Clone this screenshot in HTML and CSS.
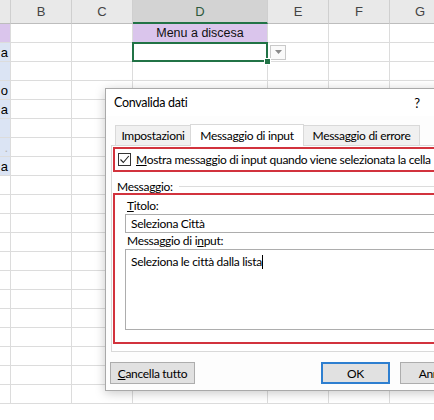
FILE: index.html
```html
<!DOCTYPE html>
<html>
<head>
<meta charset="utf-8">
<link rel="stylesheet" href="styles.css">
</head>
<body>
<div class="sheet">
  <div class="row head">
    <div class="c"></div><div class="c">B</div><div class="c">C</div><div class="c selcol">D</div><div class="c">E</div><div class="c">F</div><div class="c">G</div>
  </div>
  <div class="row">
    <div class="c purple"></div><div class="c"></div><div class="c"></div><div class="c purple menu">Menu a discesa</div><div class="c"></div><div class="c"></div><div class="c"></div>
  </div>
  <div class="row">
    <div class="c blue cut">a</div><div class="c"></div><div class="c"></div><div class="c active"></div><div class="c dd"><span class="ddbtn"><svg width="7" height="4" viewBox="0 0 7 4"><path d="M0 0h7L3.5 4z" fill="#8a8a8a"/></svg></span></div><div class="c"></div><div class="c"></div>
  </div>
  <div class="row">
    <div class="c blue"></div><div class="c"></div><div class="c"></div><div class="c"></div><div class="c"></div><div class="c"></div><div class="c"></div>
  </div>
  <div class="row">
    <div class="c blue cut">o</div><div class="c"></div><div class="c"></div><div class="c"></div><div class="c"></div><div class="c"></div><div class="c"></div>
  </div>
  <div class="row">
    <div class="c blue cut">a</div><div class="c"></div><div class="c"></div><div class="c"></div><div class="c"></div><div class="c"></div><div class="c"></div>
  </div>
  <div class="row">
    <div class="c blue"></div><div class="c"></div><div class="c"></div><div class="c"></div><div class="c"></div><div class="c"></div><div class="c"></div>
  </div>
  <div class="row">
    <div class="c blue cut faint">.</div><div class="c"></div><div class="c"></div><div class="c"></div><div class="c"></div><div class="c"></div><div class="c"></div>
  </div>
  <div class="row">
    <div class="c blue cut">a</div><div class="c"></div><div class="c"></div><div class="c"></div><div class="c"></div><div class="c"></div><div class="c"></div>
  </div>
  <div class="row"><div class="c"></div><div class="c"></div><div class="c"></div><div class="c"></div><div class="c"></div><div class="c"></div><div class="c"></div></div>
  <div class="row"><div class="c"></div><div class="c"></div><div class="c"></div><div class="c"></div><div class="c"></div><div class="c"></div><div class="c"></div></div>
  <div class="row"><div class="c"></div><div class="c"></div><div class="c"></div><div class="c"></div><div class="c"></div><div class="c"></div><div class="c"></div></div>
  <div class="row"><div class="c"></div><div class="c"></div><div class="c"></div><div class="c"></div><div class="c"></div><div class="c"></div><div class="c"></div></div>
  <div class="row"><div class="c"></div><div class="c"></div><div class="c"></div><div class="c"></div><div class="c"></div><div class="c"></div><div class="c"></div></div>
  <div class="row"><div class="c"></div><div class="c"></div><div class="c"></div><div class="c"></div><div class="c"></div><div class="c"></div><div class="c"></div></div>
  <div class="row"><div class="c"></div><div class="c"></div><div class="c"></div><div class="c"></div><div class="c"></div><div class="c"></div><div class="c"></div></div>
  <div class="row"><div class="c"></div><div class="c"></div><div class="c"></div><div class="c"></div><div class="c"></div><div class="c"></div><div class="c"></div></div>
  <div class="row"><div class="c"></div><div class="c"></div><div class="c"></div><div class="c"></div><div class="c"></div><div class="c"></div><div class="c"></div></div>
  <div class="row"><div class="c"></div><div class="c"></div><div class="c"></div><div class="c"></div><div class="c"></div><div class="c"></div><div class="c"></div></div>
  <div class="row"><div class="c"></div><div class="c"></div><div class="c"></div><div class="c"></div><div class="c"></div><div class="c"></div><div class="c"></div></div>
  <div class="row"><div class="c"></div><div class="c"></div><div class="c"></div><div class="c"></div><div class="c"></div><div class="c"></div><div class="c"></div></div>
</div>

<div class="dialog">
  <div class="titlebar">
    <span class="dtitle">Convalida dati</span>
    <span class="tbtns"><span class="help">?</span><span class="close"></span></span>
  </div>
  <div class="tabs">
    <span class="tab t1">Impostazioni</span>
    <span class="tab t2 on">Messaggio di input</span>
    <span class="tab t3">Messaggio di errore</span>
  </div>
  <div class="panel">
    <div class="redbox rb1">
      <span class="chk"><svg width="11" height="11" viewBox="0 0 11 11"><path d="M1.5 5.5l2.8 3L9.8 2" fill="none" stroke="#222" stroke-width="1.1"/></svg></span>
      <span class="chklbl"><u>M</u>ostra messaggio di input quando viene selezionata la cella</span>
    </div>
    <div class="group">
      <span class="glbl">Messaggio:</span><span class="gline"></span>
    </div>
    <div class="redbox rb2">
      <div class="flabel"><u>T</u>itolo:</div>
      <div class="input">Seleziona Città</div>
      <div class="flabel">Messaggio di i<u>n</u>put:</div>
      <div class="textarea">Seleziona le città dalla lista<span class="caret"></span></div>
    </div>
  </div>
  <div class="buttons">
    <span class="btn clear"><u>C</u>ancella tutto</span>
    <span class="spacer"></span>
    <span class="btn ok">OK</span>
    <span class="btn cancel">Annulla</span>
  </div>
</div>
</body>
</html>
```

FILE: styles.css
```css
html, body {
  margin: 0;
  padding: 0;
  background: #fff;
  overflow: hidden;
  width: 434px;
  height: 420px;
}

.sheet {
  width: 451px;
  font-family: "Liberation Sans", Arial, sans-serif;
  font-size: 12px;
  color: #000;
}

.row {
  display: grid;
  grid-template-columns: 11px 61px 61px 135px 61px 61px 61px;
  height: 19px;
}

.c {
  box-sizing: border-box;
  border-right: 1px solid #dcdcdc;
  border-bottom: 1px solid #dcdcdc;
  display: flex;
  align-items: center;
  overflow: hidden;
  white-space: nowrap;
}

.row.head {
  height: 24px;
}

.head .c {
  background: #e9e9e9;
  border-right: 1px solid #cfcfcf;
  border-bottom: 1px solid #bdbdbd;
  justify-content: center;
  color: #444;
  font-size: 13px;
}

.head .c.selcol {
  background: #d3d3d3;
  border-bottom: 2px solid #217346;
  color: #2d5a3d;
}

.purple {
  background: #dac5ec;
}

.blue {
  background: #dbe4f4;
}

.menu {
  justify-content: center;
  font-size: 12.5px;
  color: #111;
}

.cut {
  justify-content: flex-end;
  padding-right: 2px;
  font-size: 13px;
}

.faint {
  color: #b5b5b5;
}

.active {
  position: relative;
  overflow: visible;
}

.active::after {
  content: "";
  position: absolute;
  left: -1px;
  top: -1px;
  right: -1px;
  bottom: -1px;
  border: 2px solid #217346;
}

.active::before {
  content: "";
  position: absolute;
  right: -4px;
  bottom: -4px;
  width: 5px;
  height: 5px;
  background: #217346;
  border: 1px solid #fff;
  z-index: 2;
}

.dd {
  padding-left: 2px;
}

.ddbtn {
  box-sizing: border-box;
  width: 16px;
  height: 15px;
  border: 1px solid #c9c9c9;
  background: #fafafa;
  display: flex;
  align-items: center;
  justify-content: center;
}

/* Dialog */
.dialog {
  position: absolute;
  left: 105px;
  top: 88px;
  width: 381px;
  height: 303px;
  box-sizing: border-box;
  border: 1px solid #a9a9a9;
  background: #fdfdfd;
  box-shadow: 0 2px 10px rgba(0, 0, 0, 0.22);
  display: flex;
  flex-direction: column;
  font-family: Lato, "Noto Sans", sans-serif;
  font-size: 12px;
  letter-spacing: -0.3px;
  color: #000;
}

.titlebar {
  height: 27px;
  display: flex;
  align-items: center;
  justify-content: space-between;
  padding-left: 8px;
  background: #fff;
}

.dtitle {
  font-size: 12.5px;
}

.tbtns {
  display: flex;
  align-items: center;
}

.help {
  width: 44px;
  text-align: center;
  font-size: 13px;
}

.close {
  width: 46px;
  height: 20px;
}

.tabs {
  margin-top: 7px;
  height: 22px;
  display: flex;
  align-items: flex-end;
  padding-left: 9px;
}

.tab {
  box-sizing: border-box;
  height: 20px;
  border: 1px solid #d9d9d9;
  border-bottom: none;
  background: #f0f0f0;
  display: flex;
  align-items: center;
  justify-content: center;
}

.t1 {
  width: 75px;
  border-right: none;
}

.t2 {
  width: 114px;
}

.t3 {
  width: 116px;
  border-left: none;
}

.tab.on {
  height: 22px;
  background: #fff;
  position: relative;
  top: 1px;
}

.panel {
  height: 207px;
  margin-left: 5px;
  box-sizing: border-box;
  border: 1px solid #d9d9d9;
  background: #fff;
  padding: 1px 0 0 1px;
  display: flex;
  flex-direction: column;
}

.redbox {
  box-sizing: border-box;
  border: 2px solid #d2333d;
}

.rb1 {
  height: 25px;
  display: flex;
  align-items: center;
  padding-left: 3px;
}

.chk {
  box-sizing: border-box;
  width: 13px;
  height: 13px;
  border: 1px solid #333;
  background: #fff;
  display: flex;
  align-items: center;
  justify-content: center;
  margin-right: 5px;
}

.chklbl {
  white-space: nowrap;
}

.group {
  margin-top: 7px;
  height: 14px;
  display: flex;
  align-items: center;
  padding-left: 4px;
}

.glbl {
  white-space: nowrap;
}

.gline {
  flex: 1;
  height: 1px;
  background: #dcdcdc;
  margin-left: 6px;
}

.rb2 {
  height: 151px;
  padding: 3px 0 0 10px;
  display: flex;
  flex-direction: column;
}

.flabel {
  height: 16px;
  line-height: 16px;
  padding-left: 2px;
}

.input {
  box-sizing: border-box;
  height: 19px;
  border: 1px solid #adadad;
  padding-left: 5px;
  line-height: 17px;
  white-space: nowrap;
}

.textarea {
  box-sizing: border-box;
  height: 81px;
  border: 1px solid #adadad;
  padding: 4px 0 0 5px;
  line-height: 16px;
  white-space: nowrap;
  display: flex;
  align-items: flex-start;
}

.caret {
  display: inline-block;
  width: 1px;
  height: 14px;
  background: #000;
  margin-top: 1px;
}

.buttons {
  margin-top: 10px;
  height: 22px;
  display: flex;
  padding: 0 10px 0 4px;
}

.spacer {
  flex: 1;
}

.btn {
  box-sizing: border-box;
  height: 22px;
  border: 1px solid #adadad;
  background: #e1e1e1;
  display: flex;
  align-items: center;
  justify-content: center;
  white-space: nowrap;
}

.clear {
  width: 85px;
}

.ok {
  width: 69px;
  border: 2px solid #2e7fd0;
}

.cancel {
  width: 75px;
  margin-left: 10px;
}
```
